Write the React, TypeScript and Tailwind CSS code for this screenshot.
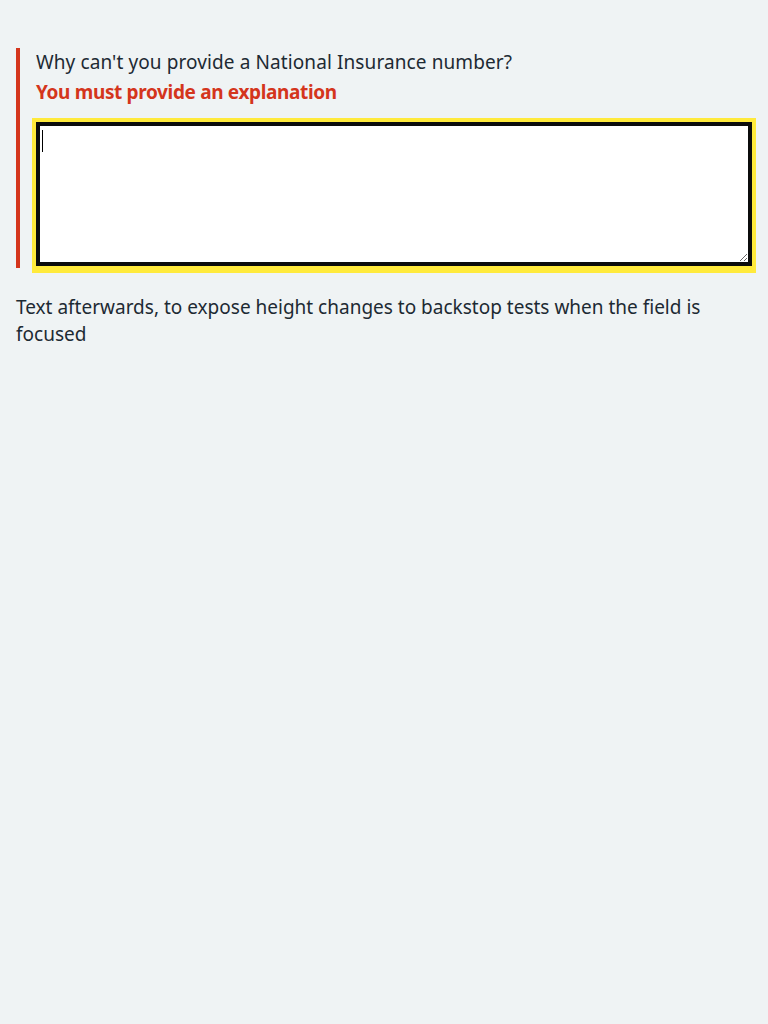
import React from "react";

export default function App() {
  return (
    <div
      className="min-h-[1024px] w-full bg-[#eff3f4] text-[#1d2a33]"
      style={{ fontFamily: '"Noto Sans", Arial, sans-serif' }}
    >
      <div className="px-4 pt-12">
        <div className="border-l-4 border-[#d4351c] pl-4 pb-[2px]">
          <label className="block pt-[2px] text-[19px] leading-[25px] mb-[5px] tracking-[0.1px]">
            Why can't you provide a National Insurance number?
          </label>
          <p className="text-[19px] leading-[25px] font-bold text-[#d4351c] mb-[17px] tracking-[-0.35px]">
            You must provide an explanation
          </p>
          <div className="relative">
            <textarea
              readOnly
              className="block w-full h-[144px] resize-y border-4 border-[#0b0c0c] bg-white p-1 text-[19px] outline-none shadow-[0_0_0_4px_#ffea3b,0_3px_0_4px_#ffea3b]"
            />
            <span className="absolute left-[6px] top-[8px] h-[22px] w-px bg-black" />
          </div>
        </div>
        <p className="mt-[26px] text-[19px] leading-[26.6px]">
          Text afterwards, to expose height changes to backstop tests when the field is focused
        </p>
      </div>
    </div>
  );
}
